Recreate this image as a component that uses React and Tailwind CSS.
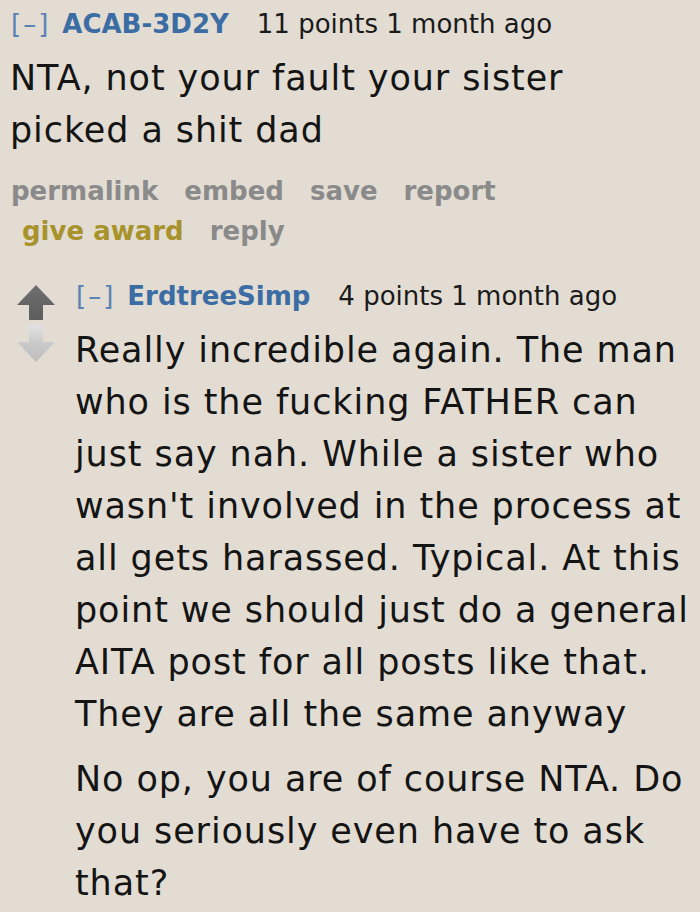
import React from "react";

function UpArrow() {
  return (
    <svg width="38" height="35" viewBox="0 0 38 35" className="block">
      <defs>
        <linearGradient id="ug" x1="0" y1="0" x2="0" y2="1">
          <stop offset="0" stopColor="#6e6e6e" />
          <stop offset="1" stopColor="#5e5e5e" />
        </linearGradient>
      </defs>
      <polygon points="19,0 38,20 26,20 26,35 12,35 12,20 0,20" fill="url(#ug)" />
    </svg>
  );
}

function DownArrow() {
  return (
    <svg width="38" height="37" viewBox="0 0 38 37" className="block">
      <defs>
        <linearGradient id="dg" x1="0" y1="0" x2="0" y2="1">
          <stop offset="0" stopColor="#e2e2e2" />
          <stop offset="0.5" stopColor="#c9c9c9" />
          <stop offset="1" stopColor="#bdbdbd" />
        </linearGradient>
      </defs>
      <polygon points="12,0 26,0 26,17 38,17 19,37 0,17 12,17" fill="url(#dg)" />
    </svg>
  );
}

function Header({ name, points }) {
  return (
    <div className="text-[26px] leading-[36px] whitespace-nowrap flex">
      <span className="text-[#5a84b5] tracking-[2px] pl-[1px]">[–]</span>
      <span className="ml-[12px] font-bold text-[#3b6ca4]">{name}</span>
      <span className="ml-[28px] text-[#1a1a1a]">{points} 1 month ago</span>
    </div>
  );
}

export default function App() {
  return (
    <div
      className="w-[700px] h-[912px] overflow-hidden bg-[#e2dcd3] text-[#141414]"
      style={{ fontFamily: '"DejaVu Sans", Verdana, sans-serif' }}
    >
      <div className="pl-[10px] pt-[6px]">
        <Header name="ACAB-3D2Y" points="11 points" />
        <div className="mt-[10px] text-[35px] leading-[52px] tracking-[0.9px]">
          NTA, not your fault your sister
          <br />
          picked a shit dad
        </div>
        <div className="mt-[15px] text-[26px] font-bold leading-[40px] text-[#8a8a8a]">
          <div className="flex gap-[26px] pl-[1px]">
            <span>permalink</span>
            <span>embed</span>
            <span>save</span>
            <span>report</span>
          </div>
          <div className="flex gap-[26px] pl-[12px]">
            <span className="text-[#a8922c]">give award</span>
            <span>reply</span>
          </div>
        </div>
      </div>
      <div className="flex mt-[27px]">
        <div className="w-[75px] shrink-0 flex flex-col pl-[17px] pt-[7px] gap-[5px]">
          <UpArrow />
          <DownArrow />
        </div>
        <div className="w-[622px]">
          <Header name="ErdtreeSimp" points="4 points" />
          <div className="mt-[10px] text-[35px] leading-[52px] tracking-[0.9px]">
            <p>
              Really incredible again. The man who is the fucking FATHER can just say nah. While a sister who wasn't
              involved in the process at all gets harassed. Typical. At this point we should just do a general AITA
              post for all posts like that. They are all the same anyway
            </p>
            <p className="mt-[13px]">No op, you are of course NTA. Do you seriously even have to ask that?</p>
          </div>
        </div>
      </div>
    </div>
  );
}
